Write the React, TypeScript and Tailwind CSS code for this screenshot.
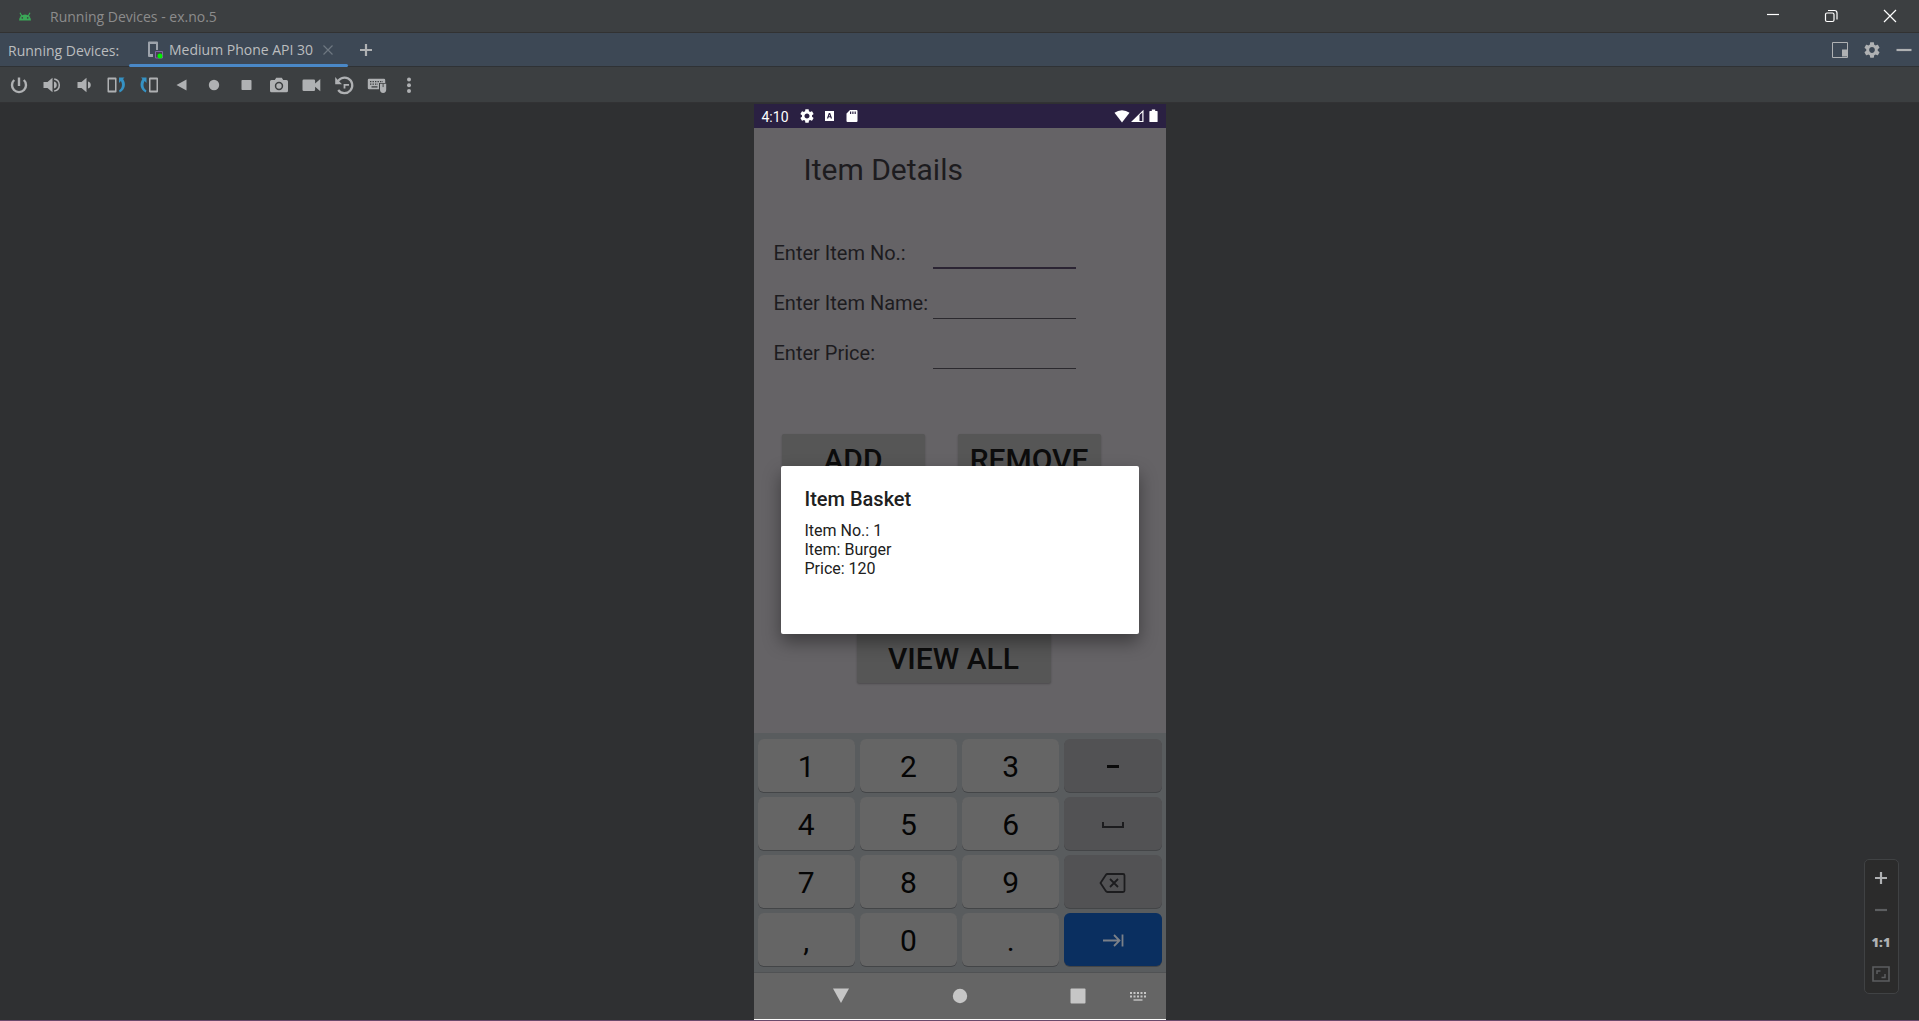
import React from "react";

type IconProps = { children: React.ReactNode; className?: string; box?: string };

function Icon({ children, className = "size-5", box = "0 0 20 20" }: IconProps) {
  return (
    <svg viewBox={box} className={className} fill="currentColor" aria-hidden="true">
      {children}
    </svg>
  );
}

const GEAR =
  "M19.14 12.94c.04-.3.06-.61.06-.94 0-.32-.02-.64-.07-.94l2.03-1.58c.18-.14.23-.41.12-.61l-1.92-3.32c-.12-.22-.37-.29-.59-.22l-2.39.96c-.5-.38-1.03-.7-1.62-.94l-.36-2.54c-.04-.24-.24-.41-.48-.41h-3.84c-.24 0-.43.17-.47.41l-.36 2.54c-.59.24-1.13.57-1.62.94l-2.39-.96c-.22-.08-.47 0-.59.22L2.74 8.87c-.12.21-.08.47.12.61l2.03 1.58c-.05.3-.09.63-.09.94s.02.64.07.94l-2.03 1.58c-.18.14-.23.41-.12.61l1.92 3.32c.12.22.37.29.59.22l2.39-.96c.5.38 1.03.7 1.62.94l.36 2.54c.05.24.24.41.48.41h3.84c.24 0 .44-.17.47-.41l.36-2.54c.59-.24 1.13-.56 1.62-.94l2.39.96c.22.08.47 0 .59-.22l1.92-3.32c.12-.22.07-.47-.12-.61l-2.01-1.58zM12 15.6c-1.98 0-3.6-1.62-3.6-3.6s1.62-3.6 3.6-3.6 3.6 1.62 3.6 3.6-1.62 3.6-3.6 3.6z";

const tools: { name: string; art: React.ReactNode }[] = [
  {
    name: "Power",
    art: (
      <g fill="none" stroke="currentColor" strokeWidth="2.4">
        <path d="M10 2.500v8.500" />
        <path d="M5.200 5a7 7 0 1 0 9.600 0" />
      </g>
    ),
  },
  {
    name: "Volume up",
    art: (
      <>
        <path d="M1.500 7h4L10.500 2.800v14.400L5.500 13h-4z" />
        <path d="M12 6.500a3.600 3.600 0 0 1 0 7z" />
        <path d="M12.200 3.900a6.200 6.200 0 0 1 0 12.200" fill="none" stroke="currentColor" strokeWidth="1.500" />
      </>
    ),
  },
  {
    name: "Volume down",
    art: (
      <>
        <path d="M3.500 7h4L12.500 2.800v14.400L7.500 13h-4z" />
        <path d="M14 6.500a3.600 3.600 0 0 1 0 7z" />
      </>
    ),
  },
  {
    name: "Rotate left",
    art: (
      <>
        <path fillRule="evenodd" d="M1.500 2.500h7a1 1 0 0 1 1 1v13a1 1 0 0 1-1 1h-7a1 1 0 0 1-1-1v-13a1 1 0 0 1 1-1zM2 4.600v10.800h6V4.600z" />
        <path d="M12 2.500h5.500l-1.400 1.600c3 4.200 2.600 10.400-3.400 13.400l-.7-1.900c3.400-2.300 3.700-6.600 1.900-9.500L12 8z" fill="#3592c4" />
      </>
    ),
  },
  {
    name: "Rotate right",
    art: (
      <>
        <path fillRule="evenodd" d="M11 2.500h7a1 1 0 0 1 1 1v13a1 1 0 0 1-1 1h-7a1 1 0 0 1-1-1v-13a1 1 0 0 1 1-1zM11.500 4.600v10.800h6V4.600z" />
        <path d="M7.500 2.500H2l1.400 1.600C.4 8.300.800 14.500 6.800 17.500l.7-1.900C4.100 13.300 3.800 9 5.600 6.100L7.500 8z" fill="#3592c4" />
      </>
    ),
  },
  { name: "Back", art: <path d="M4.500 10 14.500 4.500v11z" /> },
  { name: "Home", art: <circle cx="10" cy="10" r="5.200" /> },
  { name: "Overview", art: <rect x="4.500" y="5" width="10" height="10" rx="0.800" /> },
  {
    name: "Take screenshot",
    art: (
      <>
        <path
          fillRule="evenodd"
          d="M7.200 2.700h5.600l1.400 2.300h3.300A1.500 1.500 0 0 1 19 6.500v9.300a1.500 1.500 0 0 1-1.500 1.500h-15A1.500 1.500 0 0 1 1 15.800V6.500A1.500 1.500 0 0 1 2.500 5h3.300zM10 6.800a4.200 4.200 0 1 0 0 8.400 4.200 4.200 0 0 0 0-8.400z"
        />
        <circle cx="10" cy="11" r="2.700" />
      </>
    ),
  },
  {
    name: "Record screen",
    art: <path d="M1.800 4.500h10a1.300 1.300 0 0 1 1.300 1.300v2.700L18.300 4v12.300l-5.200-4.500v2.900a1.300 1.300 0 0 1-1.300 1.300h-10A1.300 1.300 0 0 1 .5 14.700V5.800a1.300 1.300 0 0 1 1.300-1.300z" />,
  },
  {
    name: "Snapshots",
    art: (
      <>
        <path d="M3 8.200A7.800 7.800 0 1 1 4.200 15" fill="none" stroke="currentColor" strokeWidth="2.200" />
        <path d="M1.200 2v7.300H8L5.800 7 4 5.200z" />
        <path d="M10.500 13.500V9.800H15" fill="none" stroke="currentColor" strokeWidth="1.800" />
      </>
    ),
  },
  {
    name: "Hardware input",
    art: (
      <>
        <path fillRule="evenodd" d="M2 3.700h15a1.200 1.200 0 0 1 1.200 1.200V8H12v6.300H2A1.200 1.200 0 0 1 .8 13.100V4.900A1.200 1.200 0 0 1 2 3.700z" />
        <path d="M3 6.700h13M3 9.200h8" stroke="#3c3f41" strokeWidth="1.300" strokeDasharray="1.400 1.100" />
        <path d="M4.500 11.900h6" stroke="#3c3f41" strokeWidth="1.300" />
        <path d="M13 8.800h6.200v6a3.100 3.100 0 0 1-6.200 0z" />
        <path d="M16.100 8.500v3.600" stroke="#3c3f41" strokeWidth="0.900" />
      </>
    ),
  },
  {
    name: "More",
    art: (
      <>
        <circle cx="10" cy="4.500" r="2" />
        <circle cx="10" cy="10.200" r="2" />
        <circle cx="10" cy="16" r="2" />
      </>
    ),
  },
];

function TitleBar() {
  return (
    <header className="flex h-[33px] items-center border-b border-[#323232] bg-[#3c3f41] pl-[18px] text-[#8c8c8c]">
      <svg viewBox="0 0 14 9" className="h-[9px] w-[14px] shrink-0" aria-hidden="true">
        <path d="M1 8.500a6 6 0 0 1 12 0z" fill="#3aa857" />
        <path d="M3.800 4 2 .8M10.200 4 12 .8" stroke="#3aa857" strokeWidth="1.200" />
        <circle cx="4.300" cy="5.900" r=".8" fill="#3c3f41" />
        <circle cx="9.700" cy="5.900" r=".8" fill="#3c3f41" />
      </svg>
      <h1 className="ml-[18px] flex-1 pt-[2px] text-[14px] leading-5">Running Devices - ex.no.5</h1>
      <div className="flex items-center gap-[38px] pr-[19px] text-white">
        <button aria-label="Minimize window">
          <Icon><path d="M3 8.500h12" stroke="currentColor" strokeWidth="1.200" /></Icon>
        </button>
        <button aria-label="Restore window">
          <Icon>
            <g fill="none" stroke="currentColor" strokeWidth="1.200">
              <rect x="3.500" y="7" width="8.500" height="8.500" rx="1.500" />
              <path d="M6 4.500h6.500A2.500 2.500 0 0 1 15 7v6.500" />
            </g>
          </Icon>
        </button>
        <button aria-label="Close window">
          <Icon><path d="m4 4 12 12M16 4 4 16" stroke="currentColor" strokeWidth="1.200" /></Icon>
        </button>
      </div>
    </header>
  );
}

function TabBar() {
  return (
    <div className="flex h-[34px] items-center border-b border-[#2f3235] bg-[#3d4855] pl-2 text-[14px] text-[#bbbdbf]">
      <span className="w-[113px] pt-[2px] leading-5">Running Devices:</span>
      <div className="-mb-px ml-2 flex h-[34px] w-[219px] flex-col">
        <div className="flex flex-1 items-center pl-[18px] pt-[3px]">
          <svg viewBox="0 0 16 18" className="h-[18px] w-4" aria-hidden="true">
            <path fillRule="evenodd" d="M2 .5h8a1 1 0 0 1 1 1V9H9V3H3v10h3v3H2a1 1 0 0 1-1-1V1.500a1 1 0 0 1 1-1z" fill="#9da3ab" />
            <path d="M8.500 17v-6.500h7V17z" fill="#47434f" stroke="#8463a8" />
            <circle cx="13" cy="15" r="2.500" fill="#00f000" />
          </svg>
          <span className="ml-[6px] w-[147px] whitespace-nowrap leading-5">Medium Phone API 30</span>
          <button aria-label="Close tab" className="ml-[6px] text-[#6e7780]">
            <Icon className="size-3" box="0 0 12 12"><path d="m1.500 1.500 9 9m0-9-9 9" stroke="currentColor" strokeWidth="1.200" /></Icon>
          </button>
        </div>
        <div className="h-[3px] rounded-full bg-[#4a88c7]" />
      </div>
      <button aria-label="Add device" className="ml-2 text-[#afb1b3]">
        <Icon><path d="M10 4v12M4 10h12" stroke="currentColor" strokeWidth="2.200" /></Icon>
      </button>
      <div className="ml-auto flex items-center gap-3 pr-[5px] text-[#afb1b3]">
        <button aria-label="Dock mode">
          <Icon><path d="M2.500 2.500h15v15h-15z" fill="none" stroke="currentColor" /><path d="M12 9.500h5v7h-5z" /></Icon>
        </button>
        <button aria-label="Settings">
          <Icon box="2 2 20 20"><path transform="translate(2.400 2.400) scale(.8)" d={GEAR} /></Icon>
        </button>
        <button aria-label="Hide">
          <Icon><path d="M2.500 10h15" stroke="currentColor" strokeWidth="2.200" /></Icon>
        </button>
      </div>
    </div>
  );
}

function Toolbar() {
  return (
    <div className="flex h-9 items-center border-b border-[#323234] bg-[#3c3f41] pl-[9px] pt-px text-[#afb1b3]">
      <div className="flex w-[410px] justify-between">
        {tools.map((t) => (
          <button key={t.name} aria-label={t.name}>
            <Icon>{t.art}</Icon>
          </button>
        ))}
      </div>
    </div>
  );
}

function StatusBar() {
  return (
    <div className="flex h-6 items-center bg-[#2a2042] px-2 text-white">
      <span className="w-[38px] pt-px text-[14px] leading-5">4:10</span>
      <div className="flex items-center gap-[9px]">
        <Icon className="size-[14px]" box="2 2 20 20"><path d={GEAR} /></Icon>
        <Icon className="h-[14px] w-[13px]" box="0 0 13 14">
          <path fillRule="evenodd" d="M2 2h9v10H2zM5.800 4 3.900 9.500h1.300l.4-1.200h1.800l.4 1.200h1.300L7.200 4zm.7 1.500.6 1.800H5.900z" />
        </Icon>
        <Icon className="size-[14px]" box="0 0 14 14">
          <path fillRule="evenodd" d="M5 1h6.500a1 1 0 0 1 1 1v10a1 1 0 0 1-1 1h-9a1 1 0 0 1-1-1V4.500zM5 2.500V5h1.200V2.500zm2.300 0V5h1.200V2.500zm2.300 0V5h1.200V2.500z" />
        </Icon>
      </div>
      <div className="ml-auto flex items-center">
        <Icon className="h-[14px] w-4" box="0 0 16 14"><path d="M8 13.500.5 3.700a12.500 12.500 0 0 1 15 0z" /></Icon>
        <Icon className="h-[14px] w-4" box="0 0 16 14"><path fillRule="evenodd" d="M1 13 13.500.8V13zM9.500 6v6h2.800V3.500z" /></Icon>
        <Icon className="ml-[3px] h-[14px] w-[9px]" box="0 0 9 14"><path d="M2.800.5h3.400v1.400H8a.6.6 0 0 1 .6.600v10a.6.6 0 0 1-.6.600H1a.6.6 0 0 1-.6-.6v-10a.6.6 0 0 1 .6-.6h1.800z" /></Icon>
      </div>
    </div>
  );
}

function Field({ id, label, active }: { id: string; label: string; active?: boolean }) {
  return (
    <div className="flex h-[50px] items-center">
      <label htmlFor={id} className="w-[159px] whitespace-nowrap pt-[2px] text-[20px] leading-6">
        {label}
      </label>
      <input
        id={id}
        className={
          active
            ? "h-[34px] w-[143px] border-b-2 border-[#2b2433] outline-none"
            : "h-[34px] w-[143px] border-b border-[#2b292e] outline-none"
        }
      />
    </div>
  );
}

const actionClass =
  "h-[50px] rounded-[2px] bg-[#565656] pt-[2px] text-[30px] font-medium leading-9 text-[#0c0c0c] shadow-[0_1px_2px_rgba(0,0,0,0.25)]";

function ItemForm() {
  return (
    <form className="flex flex-col text-[#1d1c1f]">
      <h2 className="ml-[50px] mt-6 text-[30px] leading-9">Item Details</h2>
      <div className="ml-5 mt-[39px]">
        <Field id="item-no" label="Enter Item No.:" active />
        <Field id="item-name" label="Enter Item Name:" />
        <Field id="item-price" label="Enter Price:" />
      </div>
      <div className="ml-7 mt-[57px] flex gap-[33px]">
        <button type="button" className={`${actionClass} w-[143px]`}>ADD</button>
        <button type="button" className={`${actionClass} w-[143px]`}>REMOVE</button>
      </div>
      <button type="button" className={`${actionClass} ml-[103px] mt-[149px] w-[194px]`}>VIEW ALL</button>
    </form>
  );
}

const keys = ["1", "2", "3", "-", "4", "5", "6", "space", "7", "8", "9", "delete", ",", "0", ".", "next"];

function keyFace(k: string) {
  if (k === "-") return <span className="mx-auto block h-[3px] w-3 bg-[#0a0a0a]" />;
  if (k === "space")
    return <Icon className="mx-auto h-6 w-6" box="0 0 24 24"><path d="M2 9v5h20V9" fill="none" stroke="#1c1c1e" strokeWidth="2" /></Icon>;
  if (k === "delete")
    return (
      <Icon className="mx-auto h-6 w-7" box="0 0 28 24">
        <g fill="none" stroke="#1c1c1e" strokeWidth="1.800">
          <path d="M8.500 3H24a1.500 1.500 0 0 1 1.500 1.500v15A1.500 1.500 0 0 1 24 21H8.500a2 2 0 0 1-1.700-.9L1.500 12l5.300-8.100A2 2 0 0 1 8.500 3z" />
          <path d="m11 8 8 8m0-8-8 8" />
        </g>
      </Icon>
    );
  if (k === "next")
    return (
      <Icon className="mx-auto h-6 w-6" box="0 0 24 24">
        <path d="M2 11.500h16M13 6l5.500 5.500L13 17M21.500 5.500v12" fill="none" stroke="#7b8088" strokeWidth="1.800" />
      </Icon>
    );
  return k;
}

function keyTone(k: string) {
  if (k === "next") return "bg-[#0a2f60]";
  if (k === "-" || k === "space" || k === "delete") return "bg-[#525254]";
  return "bg-[#656565]";
}

function Keyboard() {
  return (
    <div className="mt-auto grid grid-cols-4 gap-[5px] border-b border-[#505254] bg-[#595c5e] px-1 pb-[6px] pt-[6px]">
      {keys.map((k) => (
        <button
          key={k}
          aria-label={k}
          className={`${keyTone(k)} h-[53px] rounded-[6px] pt-[2px] text-[30px] leading-9 text-[#050505] shadow-[0_1px_0_#434547]`}
        >
          {keyFace(k)}
        </button>
      ))}
    </div>
  );
}

function NavBar() {
  return (
    <nav className="flex h-[46px] items-center bg-[#656565] pl-[77px] text-[#c6c6c6]">
      <button aria-label="Hide keyboard"><Icon><path d="M2 2.500h16L10 17z" /></Icon></button>
      <button aria-label="Home" className="ml-[99px]"><Icon><circle cx="10" cy="10" r="7.200" /></Icon></button>
      <button aria-label="Recent apps" className="ml-[98px]"><Icon><rect x="2.500" y="2.500" width="15" height="15" rx="1" /></Icon></button>
      <button aria-label="Switch keyboard" className="ml-10">
        <Icon>
          <path d="M2 7h16M2 10.500h16" fill="none" stroke="currentColor" strokeWidth="2" strokeDasharray="2 1.500" />
          <path d="M5.500 13.300h9v1.400h-9z" />
        </Icon>
      </button>
    </nav>
  );
}

function BasketDialog() {
  return (
    <div className="absolute inset-0 flex items-center justify-center pb-6">
      <div
        role="dialog"
        aria-labelledby="basket-title"
        className="h-[168px] w-[358px] rounded-[2px] bg-white px-6 pt-[21px] text-[#202020] shadow-[0_8px_18px_rgba(0,0,0,0.4)]"
      >
        <h3 id="basket-title" className="text-[20px] font-medium leading-6">Item Basket</h3>
        <p className="mt-[10px] whitespace-pre-line text-[16px] leading-[19px]">
          {"Item No.: 1\nItem: Burger\nPrice: 120"}
        </p>
      </div>
    </div>
  );
}

function Phone() {
  return (
    <div className="relative flex w-[412px] flex-col border-b border-white bg-[#656366] font-[Roboto,sans-serif]">
      <StatusBar />
      <ItemForm />
      <Keyboard />
      <NavBar />
      <BasketDialog />
    </div>
  );
}

function ZoomControls() {
  return (
    <div className="absolute bottom-[26px] right-5 flex w-[35px] flex-col items-center gap-3 rounded-[5px] border border-[#404244] bg-[#2b2b2b] pb-[9px] pr-px pt-2 text-[#afb1b3]">
      <button aria-label="Zoom in"><Icon><path d="M10 4v12M4 10h12" stroke="currentColor" strokeWidth="2.200" /></Icon></button>
      <button aria-label="Zoom out" className="text-[#5c5e60]"><Icon><path d="M4 10h12" stroke="currentColor" strokeWidth="2.200" /></Icon></button>
      <button aria-label="Actual size" className="h-5 text-[13px] font-extrabold leading-5">1:1</button>
      <button aria-label="Fit to screen" className="text-[#5c5e60]">
        <Icon>
          <path d="M2 3h16v14H2z" fill="none" stroke="currentColor" strokeWidth="1.600" />
          <path d="M6 10V7h3.500M14 10v3.500h-3.500" fill="none" stroke="currentColor" strokeWidth="1.500" />
        </Icon>
      </button>
    </div>
  );
}

export default function App() {
  return (
    <div className="flex min-h-screen flex-col border-b border-[#6a4a6c] bg-[#2f3032] font-['Open_Sans','Noto_Sans',sans-serif]">
      <TitleBar />
      <TabBar />
      <Toolbar />
      <main className="relative flex flex-1 justify-center pt-px">
        <Phone />
        <ZoomControls />
      </main>
    </div>
  );
}
